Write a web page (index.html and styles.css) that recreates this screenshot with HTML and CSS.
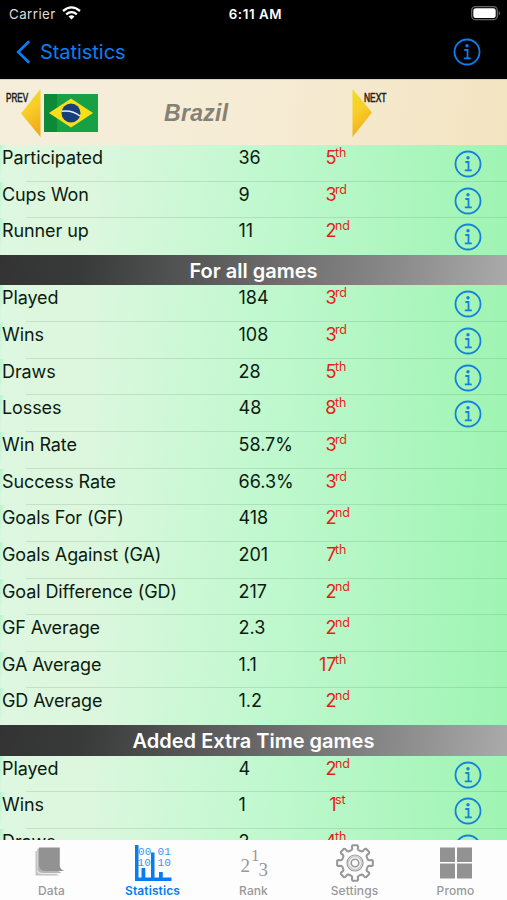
FILE: index.html
```html
<!DOCTYPE html>
<html lang="en">
<head>
<meta charset="utf-8">
<title>Statistics</title>
<link rel="stylesheet" href="styles.css">
</head>
<body>
<svg width="0" height="0" class="defs">
  <symbol id="info" viewBox="0 0 28 28">
    <circle cx="14" cy="14" r="12.5" fill="none" stroke="currentColor" stroke-width="1.8"/>
    <circle cx="14" cy="7.8" r="1.7" fill="currentColor"/>
    <path d="M11.3 12h3.2v8.3M10.8 20.4h7" fill="none" stroke="currentColor" stroke-width="1.8"/>
  </symbol>
</svg>
<div class="screen">
  <header class="status">
    <span class="carrier">Carrier
      <svg width="19" height="14" viewBox="0 0 19 14" fill="none" stroke="#fff" stroke-width="2.3"><path d="M1 5Q9.500-2.200 18 5M4.200 8.300Q9.500 4 14.800 8.300"/><path d="M9.500 13.500L6.500 10.400Q9.500 8.200 12.500 10.400Z" fill="#fff" stroke="none"/></svg>
    </span>
    <span class="time">6:11 AM</span>
    <svg class="battery" width="30" height="15" viewBox="0 0 30 15"><rect x=".7" y=".7" width="25.600" height="13" rx="3.800" fill="none" stroke="#666" stroke-width="1.300"/><rect x="2.300" y="2.300" width="22.400" height="9.800" rx="2.500" fill="#fff"/><path d="M27.700 4.700q2.600 2.500 0 5z" fill="#666"/></svg>
  </header>
  <nav class="navbar">
    <svg width="15" height="24" viewBox="0 0 15 24" fill="none" stroke="currentColor" stroke-width="2.600"><path d="M13.200 1.200L2.200 12l11 10.800"/></svg>
    <span class="back">Statistics</span>
    <svg class="nav-info"><use href="#info"/></svg>
  </nav>
  <section class="team">
    <span class="step prev">PREV</span>
    <svg class="arrow-left" width="20" height="48" viewBox="0 0 20 48"><defs><linearGradient id="gold" x2=".3" y2="1"><stop stop-color="#eee022"/><stop offset=".5" stop-color="#f8ce29"/><stop offset="1" stop-color="#f2ad19"/></linearGradient></defs><path d="M19.500 0v48L0 24.500z" fill="url(#gold)"/></svg>
    <svg class="flag" width="54" height="38" viewBox="0 0 54 38"><path fill="#18a044" d="M0 0h54v38H0z"/><path fill="#0c8a38" d="M0 0h13v38H0z"/><path fill="#f8df18" d="M5 19L27 4.500 49 19 27 33.500z"/><circle cx="27" cy="19" r="9.500" fill="#183f7c"/><path d="M18 17.200q10-1.500 18 4.800" fill="none" stroke="#e9f0f5" stroke-width="1.500"/></svg>
    <span class="name">Brazil</span>
    <svg class="arrow-right" width="20" height="48" viewBox="0 0 20 48"><path d="M.5 0v48L20 23.500z" fill="url(#gold)"/></svg>
    <span class="step next">NEXT</span>
  </section>
  <main class="list" id="list"></main>
  <footer class="tabs">
    <div class="tab">
      <svg class="stack" width="30" height="30" viewBox="0 0 30 30"><path fill="#c4c4c4" d="M.5 4h20v21.500q1 2.500 5 3H.5z"/><path fill="#eee" d="M2 2h20v22l5 3H7q-5 0-5-4z"/><path fill="#b5b5b5" d="M2.500 1.500h20v22l4 2.500H8q-5.500 0-5.500-4z"/><path fill="#929292" d="M4 .5h20.800V19q.8 4 4.700 5H10q-6-.5-6-6z"/></svg>
      <span>Data</span>
    </div>
    <div class="tab active">
      <svg width="38" height="38" viewBox="0 0 38 38" fill="currentColor"><path d="M1 1h3.500v32.500h33V37H1zM7.500 24h3.800v10H7.500zM17 8.500h3.500V34H17zM25 28h3.800v6H25z"/><g class="digits"><text x="4" y="11">00</text><text x="3.500" y="22">10</text><text x="23.500" y="11">01</text><text x="23.500" y="22">10</text></g></svg>
      <span>Statistics</span>
    </div>
    <div class="tab">
      <svg class="rank-icon" width="30" height="32" viewBox="0 0 30 32"><text x="1.500" y="25">2</text><text class="first" x="12" y="14">1</text><text x="19.500" y="29">3</text></svg>
      <span>Rank</span>
    </div>
    <div class="tab">
      <svg width="38" height="38" viewBox="-19 -19 38 38" fill="none" stroke="#979797"><path id="cog" stroke-width="2" stroke-linejoin="round"/><circle r="8" stroke-width="1.200"/><circle r="6.500" stroke="#ccc" stroke-width="1.500"/><circle r="3.800" stroke-width="1.600"/></svg>
      <span>Settings</span>
    </div>
    <div class="tab">
      <svg width="32" height="32" viewBox="0 0 32 32" fill="#929292"><path d="M0 .5h15v14.500H0zM17 .5h15v14.500H17zM0 16.500h15v15H0zM17 16.500h15v15H17z"/></svg>
      <span>Promo</span>
    </div>
  </footer>
</div>
<script src="app.js"></script>
</body>
</html>
```
FILE: styles.css
```css
* { box-sizing: border-box; }
body { margin: 0; background: #000; font-family: Inter, "Liberation Sans", sans-serif; }
.defs { position: absolute; }
.screen { width: 507px; height: 900px; overflow: hidden; display: flex; flex-direction: column; }
.status { height: 27px; flex: none; display: grid; grid-template-columns: 1fr 1fr 1fr; align-items: center; padding: 0 6px 0 9px; color: #fff; font-size: 13.3px; }
.carrier { display: flex; align-items: center; gap: 6px; color: #ddd; letter-spacing: .45px; }
.carrier svg { margin-top: -2px; }
.time { text-align: center; font-weight: 600; letter-spacing: .6px; margin-right: -1px; }
.battery { justify-self: end; }
.navbar { height: 52px; flex: none; display: flex; align-items: center; padding: 0 26px 2px 16px; color: #087ff5; }
.back { margin-left: 9px; font-size: 20px; line-height: 50px; letter-spacing: -.05px; }
.nav-info { width: 28px; height: 28px; margin-left: auto; }
.team { height: 66px; flex: none; display: flex; background: linear-gradient(100deg, #f4eedb, #f6ecd5 50%, #f3e4c1); border-top: 1px solid #d6cfbb; }
.step { font-family: "Liberation Sans", sans-serif; font-size: 12px; line-height: 14px; color: #201f18; -webkit-text-stroke: .55px; margin-top: 11px; transform-origin: left; white-space: nowrap; }
.prev { width: 15px; margin-left: 6px; transform: scaleX(.68); }
.next { margin-left: -8px; transform: scaleX(.7); z-index: 1; }
.arrow-left, .arrow-right { margin-top: 9px; flex: none; }
.flag { margin: 14px 0 0 2.5px; flex: none; }
.name { width: 254.5px; padding-left: 66.5px; font: italic bold 23px/66px "Liberation Sans", sans-serif; letter-spacing: .3px; color: #858174; }
.list { flex: 1; min-height: 0; overflow: hidden; }
.row { height: 36.65px; display: grid; grid-template-columns: 236px 65px 33px 1fr 29px; padding: 1px 24px 0 2.5px; background: linear-gradient(97deg, #b2f5ce 0, #def7e0 1%, #dcf7de 18%, #c2f8d0 50%, #aef6c0 78%, #9ef4b2 100%); color: #0c1b10; font-size: 18px; line-height: 24px; white-space: nowrap; position: relative; }
.row.ruled::after { content: ""; position: absolute; left: 26px; right: 0; bottom: 0; height: 1px; background: rgba(70, 120, 85, .17); }
.label { letter-spacing: -.1px; margin-left: -.5px; }
.rank { text-align: right; color: #e91c16; }
.suffix { margin-left: -1.5px; color: #e91c16; font-size: 12.5px; line-height: 14px; letter-spacing: -.2px; }
.row svg { width: 28px; height: 28px; margin-top: 4px; color: #1481dc; }
.heading { height: 30.5px; line-height: 32px; text-align: center; color: #fff; font-weight: 600; font-size: 20px; background: linear-gradient(97deg, #333 0, #383a39 16%, #666 50%, #868686 75%, #aaa 100%); }
.tabs { height: 60px; flex: none; background: #fdfdfd; display: grid; grid-template-columns: repeat(5, 1fr); padding: 0 1px; }
.tab { display: grid; grid-template-rows: 44px 14px; justify-items: center; align-items: center; color: #999; font-size: 12px; line-height: 14px; font-weight: 500; letter-spacing: .1px; }
.tab svg { margin-top: 2px; }
.tab .stack { margin: -1px 4px 0 0; }
.tab.active { color: #087cf2; font-weight: 600; }
.digits { font: 11px "Liberation Mono", monospace; opacity: .8; }
.rank-icon { font: 19px "Liberation Serif", serif; fill: #999; }
.first { font-size: 17px; }
```
FILE: app.js
```js
const sections = [
  { rows: [["Participated", "36", "5", "th", 1], ["Cups Won", "9", "3", "rd", 1], ["Runner up", "11", "2", "nd", 1]] },
  { title: "For all games", rows: [
    ["Played", "184", "3", "rd", 1], ["Wins", "108", "3", "rd", 1], ["Draws", "28", "5", "th", 1], ["Losses", "48", "8", "th", 1],
    ["Win Rate", "58.7%", "3", "rd"], ["Success Rate", "66.3%", "3", "rd"], ["Goals For (GF)", "418", "2", "nd"],
    ["Goals Against (GA)", "201", "7", "th"], ["Goal Difference (GD)", "217", "2", "nd"], ["GF Average", "2.3", "2", "nd"],
    ["GA Average", "1.1", "17", "th"], ["GD Average", "1.2", "2", "nd"]] },
  { title: "Added Extra Time games", rows: [["Played", "4", "2", "nd", 1], ["Wins", "1", "1", "st", 1], ["Draws", "2", "4", "th", 1]] }
];
document.getElementById("list").innerHTML = sections.map(s =>
  (s.title ? `<div class="heading">${s.title}</div>` : "") +
  s.rows.map(([label, value, rank, suffix, info], i) =>
    `<div class="row${i < s.rows.length - 1 ? " ruled" : ""}"><span class="label">${label}</span><span>${value}</span><span class="rank">${rank}</span><span class="suffix">${suffix}</span>${info ? '<svg><use href="#info"/></svg>' : ""}</div>`
  ).join("")).join("");

const points = [];
for (let i = 0; i < 8; i++) {
  for (const [offset, radius] of [[-15, 13.3], [-11, 14.5], [-10.500, 17], [-7, 18], [7, 18], [10.500, 17], [11, 14.5], [15, 13.3]]) {
    const a = (i * 45 + offset) * Math.PI / 180;
    points.push(`${(Math.sin(a) * radius).toFixed(2)} ${(-Math.cos(a) * radius).toFixed(2)}`);
  }
}
document.getElementById("cog").setAttribute("d", "M" + points.join("L") + "Z");
```
